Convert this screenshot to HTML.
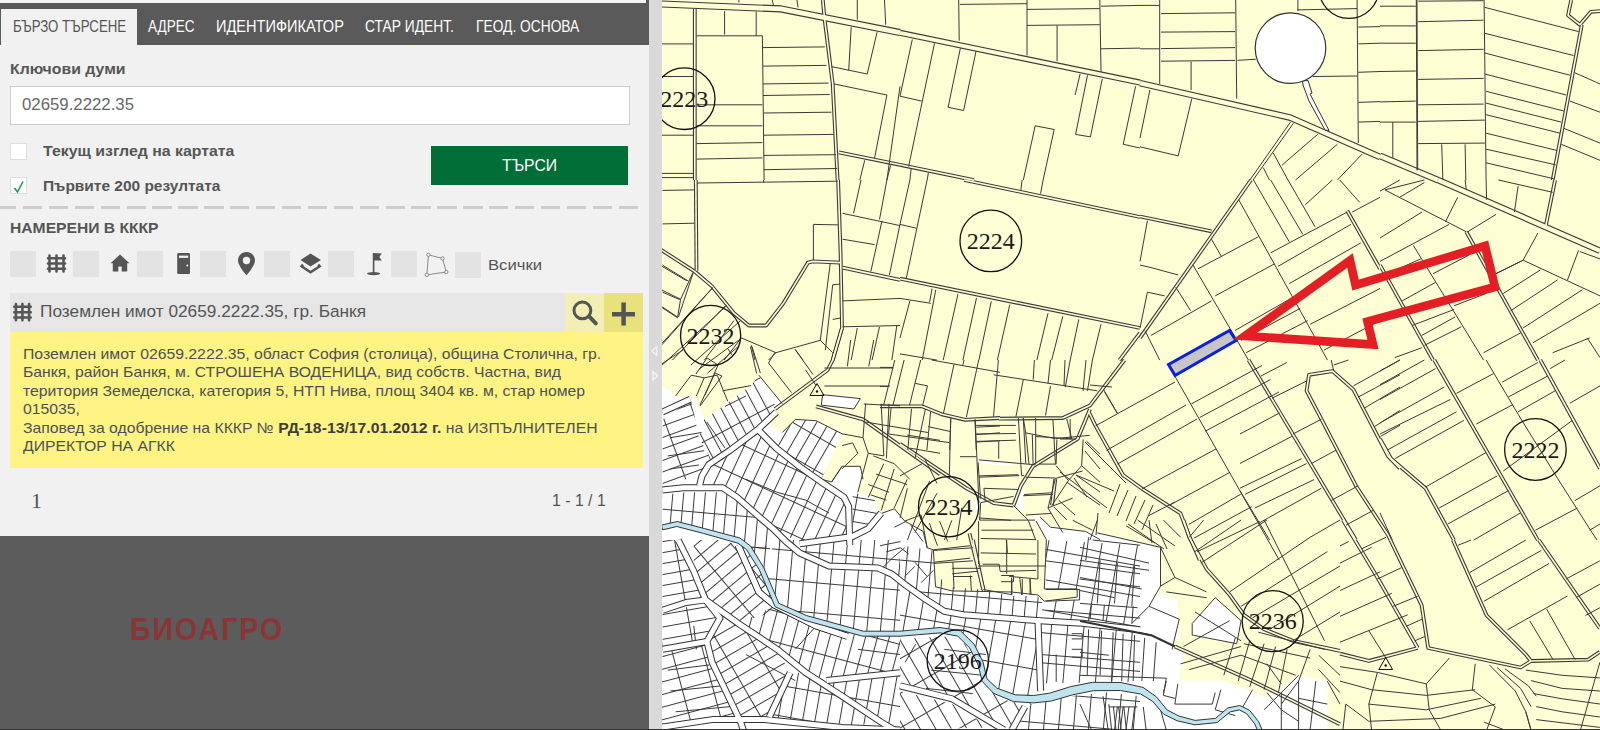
<!DOCTYPE html>
<html><head><meta charset="utf-8">
<style>
*{margin:0;padding:0;box-sizing:border-box}
html,body{width:1600px;height:730px;overflow:hidden;background:#fdfed3;font-family:"Liberation Sans",sans-serif}
.abs{position:absolute}
#panel{position:absolute;left:0;top:0;width:649px;height:730px;background:#f1f1f1}
#tabs{position:absolute;left:0;top:0;width:649px;height:44.6px;background:#5a5a5a}
.tab{position:absolute;top:0;height:42px;color:#fff;font-size:14.5px;line-height:47px;white-space:nowrap;letter-spacing:-0.3px}
.tab.active{background:#f1f1f1;top:8.5px;height:36.1px;left:1px;width:136px}
#topstrip{position:absolute;left:0;top:0;width:646px;height:3px;background:#f3f3f3;z-index:1}
.lbl{position:absolute;font-weight:bold;color:#555;font-size:14.5px;white-space:nowrap}
#kw{position:absolute;left:10px;top:86px;width:620px;height:39px;background:#fff;border:1px solid #ccc}
#kw span{position:absolute;left:11px;top:9px;font-size:16px;color:#666}
.cb{position:absolute;left:10px;width:17px;height:17px;background:#fff;border:1px solid #ddd}
#btn{position:absolute;left:431px;top:146px;width:197px;height:39px;background:#006e36;color:#fff;font-size:16.5px;text-align:center;line-height:39px}
#dash{position:absolute;left:-3.5px;top:206px;width:646.5px;height:2.6px;background:repeating-linear-gradient(90deg,#cdcdcd 0 19.3px,transparent 19.3px 25.9px)}
.sq{position:absolute;top:251px;width:26px;height:26px;background:#e3e3e3}
#res{position:absolute;left:10px;top:293px;width:633px;height:39px;background:#e6e6e6}
#yellow{position:absolute;left:10px;top:332px;width:633px;height:136px;background:#fff383;color:#4a4a4a;font-size:14.6px;line-height:18.3px;padding:13px 13px 0 13px}
#dark{position:absolute;left:0;top:536px;width:649px;height:194px;background:#5c5c5c}
#scroll{position:absolute;left:649px;top:0;width:13px;height:730px;background:#d9d9d9}
.t{position:absolute;white-space:nowrap;line-height:1;transform-origin:0 0}
.w{color:#fff}.b{font-weight:bold;color:#555}
.yt{position:absolute;left:22.5px;white-space:nowrap;font-size:15px;line-height:18.4px;color:#4a5256;transform:scaleX(1.05);transform-origin:0 0}
.yt b{color:#3d3d3d}
#map{position:absolute;left:662px;top:0;width:938px;height:730px;background:#fdfed3;overflow:hidden}
</style></head><body>
<div id="panel">
  <div id="topstrip"></div>
  <div id="tabs"><div class="tab active"></div></div>
  <span class="t" style="left:12.5px;top:18px;font-size:16.3px;color:#555;transform:scaleX(0.813)">БЪРЗО ТЪРСЕНЕ</span>
  <span class="t w" style="left:148px;top:18px;font-size:16.3px;transform:scaleX(0.831)">АДРЕС</span>
  <span class="t w" style="left:215.5px;top:18px;font-size:16.3px;transform:scaleX(0.895)">ИДЕНТИФИКАТОР</span>
  <span class="t w" style="left:364.5px;top:18px;font-size:16.3px;transform:scaleX(0.848)">СТАР ИДЕНТ.</span>
  <span class="t w" style="left:475.5px;top:18px;font-size:16.3px;transform:scaleX(0.846)">ГЕОД. ОСНОВА</span>
  <span class="t b" style="left:10px;top:62.2px;font-size:14px;transform:scaleX(1.13)">Ключови думи</span>
  <div id="kw"></div>
  <span class="t" style="left:22px;top:97px;font-size:16.8px;color:#666">02659.2222.35</span>
  <div class="cb" style="top:143px"></div>
  <span class="t b" style="left:43px;top:143px;font-size:15px;transform:scaleX(1.057)">Текущ изглед на картата</span>
  <div class="cb" style="top:177px"></div>
  <svg class="abs" style="left:12px;top:180px" width="14" height="14"><path d="M2.5,8 L5.5,12 L11,1.5" fill="none" stroke="#1f9e4e" stroke-width="1.6"/></svg>
  <span class="t b" style="left:43px;top:177.5px;font-size:15px;transform:scaleX(1.031)">Първите 200 резултата</span>
  <div id="btn"><span class="t w" style="left:71px;top:11px;font-size:17px;transform:scaleX(0.927)">ТЪРСИ</span></div>
  <div id="dash"></div>
  <span class="t b" style="left:10px;top:220.5px;font-size:14px;transform:scaleX(1.1175)">НАМЕРЕНИ В КККР</span>
  <div class="sq" style="left:10px"></div>
  <div class="sq" style="left:73px"></div>
  <div class="sq" style="left:137px"></div>
  <div class="sq" style="left:200px"></div>
  <div class="sq" style="left:264px"></div>
  <div class="sq" style="left:328px"></div>
  <div class="sq" style="left:391px"></div>
  <div class="sq" style="left:455px;top:252px"></div>
  <svg class="abs" style="left:0;top:0;overflow:visible" width="650" height="340">
 <g fill="#555" stroke="#555">
  <g stroke-width="2.6" stroke-linecap="round">
   <path d="M49.5,255.5V271.5M56.5,255.5V271.5M63.5,255.5V271.5M48,258.3H65M48,263.5H65M48,268.8H65"/>
  </g>
  <path stroke="none" d="M120,254.5L110.5,263.3H112.8V271.5H118.3V266.5H121.7V271.5H127.2V263.3H129.5Z"/>
  <rect x="177.2" y="253" width="12.8" height="21" rx="1.2" stroke="none"/>
  <rect x="179" y="255.6" width="9.2" height="2.3" fill="#f1f1f1" stroke="none"/>
  <circle cx="187.3" cy="265.5" r="1" fill="#f1f1f1" stroke="none"/>
  <path stroke="none" d="M246.5,252C241.8,252 238,255.8 238,260.5C238,266 246.5,275.2 246.5,275.2C246.5,275.2 255,266 255,260.5C255,255.8 251.2,252 246.5,252ZM246.5,256.8A3.7,3.7 0 1 1 246.5,264.2A3.7,3.7 0 1 1 246.5,256.8Z" fill-rule="evenodd"/>
  <path stroke="none" d="M300.5,260L310.5,253.5L321,260L310.5,266.5Z"/>
  <path fill="none" stroke-width="2.4" d="M303,264.5L301.5,266.2L310.5,272.2L319.8,266.2L318.2,264.5"/>
  <rect x="372.8" y="253" width="1.6" height="20" stroke="none"/>
  <path stroke="none" d="M373.5,253L381.8,253.5L379.3,257L381.8,260.5L373.5,260.5Z"/>
  <ellipse cx="373.6" cy="273.6" rx="6.6" ry="1.6" stroke="none"/>
 </g>
 <g fill="none" stroke="#8a8a8a" stroke-width="1">
  <path d="M428.5,254.8L442.5,258.5L446.3,272L426.8,274.8Z"/>
  <circle cx="428.5" cy="254.8" r="1.7" fill="#f1f1f1"/><circle cx="442.5" cy="258.5" r="1.7" fill="#f1f1f1"/>
  <circle cx="446.3" cy="272" r="1.7" fill="#f1f1f1"/><circle cx="426.8" cy="274.8" r="1.7" fill="#f1f1f1"/>
 </g>
</svg>
  <span class="t" style="left:488px;top:257.5px;font-size:14px;color:#555;transform:scaleX(1.19)">Всички</span>
  <div id="res"></div>
  <div class="abs" style="left:565px;top:293px;width:38.5px;height:39px;background:#f2eeb4"></div>
  <div class="abs" style="left:603.5px;top:293px;width:39.5px;height:39px;background:#e8e17c"></div>
  <svg class="abs" style="left:0;top:0;overflow:visible" width="650" height="340">
 <g stroke="#555" stroke-linecap="round" fill="none">
  <path stroke-width="2.6" d="M15.9,304V320.2M22.4,304V320.2M29.1,304V320.2M14.3,306.8H30.7M14.3,312.3H30.7M14.3,317.5H30.7"/>
  <circle cx="582.4" cy="310.4" r="8.4" stroke-width="3"/>
  <path d="M589.6,316.8L595.8,323.3" stroke-width="4"/>
  <path d="M623.6,302.6V325.6M612,314.3H635" stroke-width="4.5" stroke-linecap="butt"/>
 </g>
</svg>
  <span class="t" style="left:39.5px;top:302.5px;font-size:16.3px;color:#555;transform:scaleX(1.06)">Поземлен имот 02659.2222.35, гр. Банкя</span>
  <div id="yellow"></div>
  <div class="yt" style="top:345.0px">Поземлен имот 02659.2222.35, област София (столица), община Столична, гр.</div>
  <div class="yt" style="top:363.4px">Банкя, район Банкя, м. СТРОШЕНА ВОДЕНИЦА, вид собств. Частна, вид</div>
  <div class="yt" style="top:381.8px">територия Земеделска, категория 5, НТП Нива, площ 3404 кв. м, стар номер</div>
  <div class="yt" style="top:400.2px">015035,</div>
  <div class="yt" style="top:418.6px">Заповед за одобрение на КККР № <b>РД-18-13/17.01.2012 г.</b> на ИЗПЪЛНИТЕЛЕН</div>
  <div class="yt" style="top:437.0px">ДИРЕКТОР НА АГКК</div>
  <span class="t" style="left:31px;top:490px;font-size:22px;color:#555;font-family:'Liberation Serif',serif">1</span>
  <span class="t" style="left:552px;top:491.5px;font-size:16.5px;color:#555;transform:scaleX(0.96)">1 - 1 / 1</span>
  <div id="dark"></div>
  <span class="t" style="left:129.5px;top:614px;font-size:31px;color:#8b3537;font-weight:bold;letter-spacing:2.2px;transform:scaleX(0.92)">БИОАГРО</span>
</div>
<div id="scroll"></div>
<svg class="abs" style="left:649px;top:340px" width="13" height="45"><path d="M7.8,6.8L2.8,11L7.8,15.2Z" fill="none" stroke="#f4f4f4" stroke-width="1.3"/><path d="M4,31.5L8.5,35.7L4,40Z" fill="none" stroke="#f4f4f4" stroke-width="1.3"/></svg>
<div id="map"></div>
<div id="mapsvg" style="position:absolute;left:662px;top:0;width:938px;height:730px;overflow:hidden"><div style="position:absolute;left:-662px;top:0"><svg width="1600" height="730" viewBox="0 0 1600 730" style="position:absolute;left:0;top:0">
<defs>
<pattern id="h1500_115" patternUnits="userSpaceOnUse" width="11.5" height="20" patternTransform="rotate(60)"><line x1="0.5" y1="0" x2="0.5" y2="20" stroke="#3a3a3a" stroke-width="1"/></pattern>
<pattern id="h150_300" patternUnits="userSpaceOnUse" width="30" height="20" patternTransform="rotate(-75)"><line x1="0.5" y1="0" x2="0.5" y2="20" stroke="#3a3a3a" stroke-width="1"/></pattern>
<pattern id="h600_135" patternUnits="userSpaceOnUse" width="13.5" height="20" patternTransform="rotate(-30)"><line x1="0.5" y1="0" x2="0.5" y2="20" stroke="#3a3a3a" stroke-width="1"/></pattern>
<pattern id="h700_300" patternUnits="userSpaceOnUse" width="30" height="20" patternTransform="rotate(-20)"><line x1="0.5" y1="0" x2="0.5" y2="20" stroke="#3a3a3a" stroke-width="1"/></pattern>
<pattern id="h100_122" patternUnits="userSpaceOnUse" width="12.2" height="20" patternTransform="rotate(-80)"><line x1="0.5" y1="0" x2="0.5" y2="20" stroke="#3a3a3a" stroke-width="1"/></pattern>
<pattern id="h500_300" patternUnits="userSpaceOnUse" width="30" height="20" patternTransform="rotate(-40)"><line x1="0.5" y1="0" x2="0.5" y2="20" stroke="#3a3a3a" stroke-width="1"/></pattern>
<pattern id="h300_300" patternUnits="userSpaceOnUse" width="30" height="20" patternTransform="rotate(-60)"><line x1="0.5" y1="0" x2="0.5" y2="20" stroke="#3a3a3a" stroke-width="1"/></pattern>
<pattern id="h1700_108" patternUnits="userSpaceOnUse" width="10.8" height="20" patternTransform="rotate(80)"><line x1="0.5" y1="0" x2="0.5" y2="20" stroke="#3a3a3a" stroke-width="1"/></pattern>
<pattern id="h1000_149" patternUnits="userSpaceOnUse" width="14.9" height="20" patternTransform="rotate(10)"><line x1="0.5" y1="0" x2="0.5" y2="20" stroke="#3a3a3a" stroke-width="1"/></pattern>
<pattern id="h950_108" patternUnits="userSpaceOnUse" width="10.8" height="20" patternTransform="rotate(5)"><line x1="0.5" y1="0" x2="0.5" y2="20" stroke="#3a3a3a" stroke-width="1"/></pattern>
<pattern id="h100_300" patternUnits="userSpaceOnUse" width="30" height="20" patternTransform="rotate(-80)"><line x1="0.5" y1="0" x2="0.5" y2="20" stroke="#3a3a3a" stroke-width="1"/></pattern>
<pattern id="h950_135" patternUnits="userSpaceOnUse" width="13.5" height="20" patternTransform="rotate(5)"><line x1="0.5" y1="0" x2="0.5" y2="20" stroke="#3a3a3a" stroke-width="1"/></pattern>
<pattern id="h950_162" patternUnits="userSpaceOnUse" width="16.2" height="20" patternTransform="rotate(5)"><line x1="0.5" y1="0" x2="0.5" y2="20" stroke="#3a3a3a" stroke-width="1"/></pattern>
<pattern id="h1000_122" patternUnits="userSpaceOnUse" width="12.2" height="20" patternTransform="rotate(10)"><line x1="0.5" y1="0" x2="0.5" y2="20" stroke="#3a3a3a" stroke-width="1"/></pattern>
<pattern id="h1050_115" patternUnits="userSpaceOnUse" width="11.5" height="20" patternTransform="rotate(15)"><line x1="0.5" y1="0" x2="0.5" y2="20" stroke="#3a3a3a" stroke-width="1"/></pattern>
<pattern id="h1000_300" patternUnits="userSpaceOnUse" width="30" height="20" patternTransform="rotate(10)"><line x1="0.5" y1="0" x2="0.5" y2="20" stroke="#3a3a3a" stroke-width="1"/></pattern>
<pattern id="h950_149" patternUnits="userSpaceOnUse" width="14.9" height="20" patternTransform="rotate(5)"><line x1="0.5" y1="0" x2="0.5" y2="20" stroke="#3a3a3a" stroke-width="1"/></pattern>
<pattern id="h800_300" patternUnits="userSpaceOnUse" width="30" height="20" patternTransform="rotate(-10)"><line x1="0.5" y1="0" x2="0.5" y2="20" stroke="#3a3a3a" stroke-width="1"/></pattern>
<pattern id="h50_300" patternUnits="userSpaceOnUse" width="30" height="20" patternTransform="rotate(-85)"><line x1="0.5" y1="0" x2="0.5" y2="20" stroke="#3a3a3a" stroke-width="1"/></pattern>
<pattern id="h600_300" patternUnits="userSpaceOnUse" width="30" height="20" patternTransform="rotate(-30)"><line x1="0.5" y1="0" x2="0.5" y2="20" stroke="#3a3a3a" stroke-width="1"/></pattern>
<pattern id="h1700_122" patternUnits="userSpaceOnUse" width="12.2" height="20" patternTransform="rotate(80)"><line x1="0.5" y1="0" x2="0.5" y2="20" stroke="#3a3a3a" stroke-width="1"/></pattern>
<pattern id="h950_122" patternUnits="userSpaceOnUse" width="12.2" height="20" patternTransform="rotate(5)"><line x1="0.5" y1="0" x2="0.5" y2="20" stroke="#3a3a3a" stroke-width="1"/></pattern>
<pattern id="h250_300" patternUnits="userSpaceOnUse" width="30" height="20" patternTransform="rotate(-65)"><line x1="0.5" y1="0" x2="0.5" y2="20" stroke="#3a3a3a" stroke-width="1"/></pattern>
<pattern id="h1000_176" patternUnits="userSpaceOnUse" width="17.6" height="20" patternTransform="rotate(10)"><line x1="0.5" y1="0" x2="0.5" y2="20" stroke="#3a3a3a" stroke-width="1"/></pattern>
<pattern id="h1500_300" patternUnits="userSpaceOnUse" width="30" height="20" patternTransform="rotate(60)"><line x1="0.5" y1="0" x2="0.5" y2="20" stroke="#3a3a3a" stroke-width="1"/></pattern>
<pattern id="h1600_108" patternUnits="userSpaceOnUse" width="10.8" height="20" patternTransform="rotate(70)"><line x1="0.5" y1="0" x2="0.5" y2="20" stroke="#3a3a3a" stroke-width="1"/></pattern>
<pattern id="h1520_300" patternUnits="userSpaceOnUse" width="30" height="20" patternTransform="rotate(62)"><line x1="0.5" y1="0" x2="0.5" y2="20" stroke="#3a3a3a" stroke-width="1"/></pattern>
<pattern id="h1400_108" patternUnits="userSpaceOnUse" width="10.8" height="20" patternTransform="rotate(50)"><line x1="0.5" y1="0" x2="0.5" y2="20" stroke="#3a3a3a" stroke-width="1"/></pattern>
<pattern id="h620_101" patternUnits="userSpaceOnUse" width="10.1" height="20" patternTransform="rotate(-28)"><line x1="0.5" y1="0" x2="0.5" y2="20" stroke="#3a3a3a" stroke-width="1"/></pattern>
<pattern id="h1650_122" patternUnits="userSpaceOnUse" width="12.2" height="20" patternTransform="rotate(75)"><line x1="0.5" y1="0" x2="0.5" y2="20" stroke="#3a3a3a" stroke-width="1"/></pattern>
<pattern id="h750_300" patternUnits="userSpaceOnUse" width="30" height="20" patternTransform="rotate(-15)"><line x1="0.5" y1="0" x2="0.5" y2="20" stroke="#3a3a3a" stroke-width="1"/></pattern>
<pattern id="h1150_115" patternUnits="userSpaceOnUse" width="11.5" height="20" patternTransform="rotate(25)"><line x1="0.5" y1="0" x2="0.5" y2="20" stroke="#3a3a3a" stroke-width="1"/></pattern>
<pattern id="h1200_108" patternUnits="userSpaceOnUse" width="10.8" height="20" patternTransform="rotate(30)"><line x1="0.5" y1="0" x2="0.5" y2="20" stroke="#3a3a3a" stroke-width="1"/></pattern>
</defs>
<polygon points="662.0,385.6 678.2,397.3 691.2,396.0 699.0,406.4 704.2,419.4 722.5,406.4 727.7,401.2 751.1,385.6 758.9,375.2 782.3,403.8 774.5,411.6 771.9,427.2 782.3,432.4 795.3,419.4 816.1,420.7 842.1,433.8 821.3,479.3 831.7,481.9 842.1,466.3 860.4,466.3 863.0,479.3 857.8,492.3 873.4,497.5 880.0,513.9 894.4,508.8 904.6,521.0 923.1,531.4 927.2,547.8 933.4,549.8 935.5,586.8 951.9,591.0 1011.5,592.0 1038.2,595.0 1044.3,601.2 1077.2,597.1 1077.2,588.9 1044.3,588.9 1046.4,539.6 1036.1,521.0 1023.8,519.0 1040.0,517.0 1050.5,527.2 1085.4,531.4 1100.0,540.0 1150.0,545.0 1160.0,550.0 1152.0,590.0 1177.0,600.0 1180.0,635.0 1171.0,649.0 1184.0,652.0 1179.0,680.6 1223.0,680.6 1254.5,693.6 1267.5,696.2 1296.0,678.0 1327.0,683.0 1325.0,730.0 662.0,730.0" fill="#ffffff" stroke="none"/>
<polygon points="1060.0,530.0 1095.0,533.0 1161.0,549.0 1161.0,560.0 1060.0,560.0" fill="#ffffff" stroke="none"/>
<polygon points="822.6,394.7 860.4,398.6 853.9,409.0 821.3,405.1" fill="#ffffff" stroke="none"/>
<polygon points="1033.2,517.9 1057.9,530.2 1092.4,532.7 1092.4,540.1 1048.0,540.1" fill="#ffffff" stroke="none"/>
<polygon points="978.9,459.9 1013.5,463.6 1012.2,466.1 978.9,463.6" fill="#ffffff" stroke="none"/>
<polygon points="1015.9,488.3 1023.3,485.8 1020.9,508.0 1013.5,508.0" fill="#ffffff" stroke="none"/>
<polygon points="1014.2,488.7 1024.1,492.0 1024.1,513.4 1014.2,506.8" fill="#ffffff" stroke="none"/>
<polygon points="974.8,495.3 984.6,501.9 974.8,513.4" fill="#ffffff" stroke="none"/>
<polygon points="1080.0,531.5 1097.3,532.9 1160.5,547.3 1160.5,586.1 1149.0,606.3 1179.2,619.2 1172.0,649.4 1166.3,678.2 1252.6,689.7 1264.1,709.8 1281.3,692.6 1298.6,675.3 1327.3,681.1 1327.3,730.0 1080.0,730.0" fill="#ffffff" stroke="none"/>
<polygon points="1192.2,623.5 1215.2,597.7 1241.1,620.7 1236.7,643.7 1192.2,635.0" fill="#ffffff" stroke="none"/>
<polygon points="704.2,419.4 722.5,406.4 751.1,385.6 758.9,375.2 777.1,409.0 758.9,429.8 735.5,445.5 712.0,461.1 699.0,437.7" fill="url(#h620_101)" stroke="none"/>
<polygon points="704.2,419.4 722.5,406.4 751.1,385.6 758.9,375.2 777.1,409.0 758.9,429.8 735.5,445.5 712.0,461.1 699.0,437.7" fill="url(#h1520_300)" stroke="none"/>
<polygon points="662.6,419.4 691.2,399.9 699.0,437.7 712.0,461.1 702.9,476.7 686.0,479.3 662.6,484.5" fill="url(#h1600_108)" stroke="none"/>
<polygon points="662.6,419.4 691.2,399.9 699.0,437.7 712.0,461.1 702.9,476.7 686.0,479.3 662.6,484.5" fill="url(#h700_300)" stroke="none"/>
<polygon points="758.9,429.8 777.1,448.1 805.7,466.3 842.1,492.3 850.0,505.3 850.0,536.5 797.9,541.7 777.1,531.3 758.9,513.1 738.1,494.9 722.5,488.4 702.9,484.5 712.0,461.1 735.5,445.5" fill="url(#h1150_115)" stroke="none"/>
<polygon points="758.9,429.8 777.1,448.1 805.7,466.3 842.1,492.3 850.0,505.3 850.0,536.5 797.9,541.7 777.1,531.3 758.9,513.1 738.1,494.9 722.5,488.4 702.9,484.5 712.0,461.1 735.5,445.5" fill="url(#h250_300)" stroke="none"/>
<polygon points="782.3,432.5 795.3,419.4 816.1,420.7 842.1,433.8 821.3,479.3 805.7,466.3 777.1,448.1" fill="url(#h1200_108)" stroke="none"/>
<polygon points="782.3,432.5 795.3,419.4 816.1,420.7 842.1,433.8 821.3,479.3 805.7,466.3 777.1,448.1" fill="url(#h300_300)" stroke="none"/>
<polygon points="662.6,494.9 686.0,492.3 722.5,492.3 738.1,497.5 758.9,515.7 774.5,533.9 764.1,552.1 753.7,560.0 748.5,552.1 735.5,539.1 704.2,531.3 680.8,526.1 662.6,526.1" fill="url(#h950_108)" stroke="none"/>
<polygon points="662.6,494.9 686.0,492.3 722.5,492.3 738.1,497.5 758.9,515.7 774.5,533.9 764.1,552.1 753.7,560.0 748.5,552.1 735.5,539.1 704.2,531.3 680.8,526.1 662.6,526.1" fill="url(#h50_300)" stroke="none"/>
<polygon points="852.6,492.3 873.4,497.5 881.2,513.1 868.2,528.7 852.6,536.5" fill="url(#h100_122)" stroke="none"/>
<polygon points="852.6,492.3 873.4,497.5 881.2,513.1 868.2,528.7 852.6,536.5" fill="url(#h1000_300)" stroke="none"/>
<polygon points="662.6,540.0 678.2,540.0 693.8,571.2 705.5,599.9 686.0,602.5 662.6,610.3" fill="url(#h1700_108)" stroke="none"/>
<polygon points="662.6,540.0 678.2,540.0 693.8,571.2 705.5,599.9 686.0,602.5 662.6,610.3" fill="url(#h800_300)" stroke="none"/>
<polygon points="693.8,540.0 719.9,540.0 748.5,547.8 761.5,568.6 777.1,605.1 769.3,612.9 738.1,623.3 705.5,599.9 693.8,571.2" fill="url(#h1400_108)" stroke="none"/>
<polygon points="693.8,540.0 719.9,540.0 748.5,547.8 761.5,568.6 777.1,605.1 769.3,612.9 738.1,623.3 705.5,599.9 693.8,571.2" fill="url(#h500_300)" stroke="none"/>
<polygon points="738.1,623.3 777.1,605.1 805.8,618.1 863.0,633.7 900.0,636.3 900.0,672.7 826.6,680.6 805.8,672.7 777.1,649.3" fill="url(#h1050_115)" stroke="none"/>
<polygon points="738.1,623.3 777.1,605.1 805.8,618.1 863.0,633.7 900.0,636.3 900.0,672.7 826.6,680.6 805.8,672.7 777.1,649.3" fill="url(#h150_300)" stroke="none"/>
<polygon points="706.9,641.5 712.1,662.3 740.7,722.2 769.3,717.0 790.1,672.7 777.1,649.3 738.1,623.3 719.9,618.1" fill="url(#h1500_115)" stroke="none"/>
<polygon points="706.9,641.5 712.1,662.3 740.7,722.2 769.3,717.0 790.1,672.7 777.1,649.3 738.1,623.3 719.9,618.1" fill="url(#h600_300)" stroke="none"/>
<polygon points="662.6,651.9 706.9,644.1 712.1,662.3 740.7,722.2 712.1,719.6 660.0,727.4" fill="url(#h1650_122)" stroke="none"/>
<polygon points="662.6,651.9 706.9,644.1 712.1,662.3 740.7,722.2 712.1,719.6 660.0,727.4" fill="url(#h750_300)" stroke="none"/>
<polygon points="662.6,612.9 705.5,602.5 719.9,618.1 706.9,641.5 662.6,649.3" fill="url(#h1700_122)" stroke="none"/>
<polygon points="662.6,612.9 705.5,602.5 719.9,618.1 706.9,641.5 662.6,649.3" fill="url(#h800_300)" stroke="none"/>
<polygon points="790.1,672.7 805.8,672.7 826.6,680.6 842.2,696.2 881.2,722.2 842.2,727.4 764.1,719.6 769.3,717.0" fill="url(#h1000_122)" stroke="none"/>
<polygon points="790.1,672.7 805.8,672.7 826.6,680.6 842.2,696.2 881.2,722.2 842.2,727.4 764.1,719.6 769.3,717.0" fill="url(#h100_300)" stroke="none"/>
<polygon points="826.6,681.9 900.0,674.0 900.0,730.0 894.3,730.0 881.2,722.2 842.2,696.2" fill="url(#h1000_122)" stroke="none"/>
<polygon points="826.6,681.9 900.0,674.0 900.0,730.0 894.3,730.0 881.2,722.2 842.2,696.2" fill="url(#h100_300)" stroke="none"/>
<polygon points="771.9,540.0 900.0,540.0 900.0,589.5 855.2,569.9 829.2,566.0 797.9,555.6 771.9,555.6" fill="url(#h950_135)" stroke="none"/>
<polygon points="771.9,540.0 900.0,540.0 900.0,589.5 855.2,569.9 829.2,566.0 797.9,555.6 771.9,555.6" fill="url(#h50_300)" stroke="none"/>
<polygon points="771.9,555.6 797.9,555.6 829.2,566.0 855.2,569.9 900.0,589.5 900.0,633.7 863.0,633.7 805.8,618.1 777.1,605.1 761.5,568.6 748.5,547.8 769.3,545.2" fill="url(#h950_135)" stroke="none"/>
<polygon points="771.9,555.6 797.9,555.6 829.2,566.0 855.2,569.9 900.0,589.5 900.0,633.7 863.0,633.7 805.8,618.1 777.1,605.1 761.5,568.6 748.5,547.8 769.3,545.2" fill="url(#h50_300)" stroke="none"/>
<polygon points="900.0,545.2 933.8,550.4 933.8,573.8 952.1,586.9 978.1,589.5 1011.9,596.0 1037.9,596.0 1041.9,602.5 1040.6,620.7 978.1,615.5 944.2,610.3 900.0,579.0" fill="url(#h950_122)" stroke="none"/>
<polygon points="900.0,545.2 933.8,550.4 933.8,573.8 952.1,586.9 978.1,589.5 1011.9,596.0 1037.9,596.0 1041.9,602.5 1040.6,620.7 978.1,615.5 944.2,610.3 900.0,579.0" fill="url(#h50_300)" stroke="none"/>
<polygon points="1045.8,540.0 1140.0,545.2 1140.0,629.8 1082.2,623.3 1040.6,620.7 1043.2,602.5 1045.8,601.2 1079.6,599.9 1079.6,589.5 1045.8,589.5" fill="url(#h1000_176)" stroke="none"/>
<polygon points="1045.8,540.0 1140.0,545.2 1140.0,629.8 1082.2,623.3 1040.6,620.7 1043.2,602.5 1045.8,601.2 1079.6,599.9 1079.6,589.5 1045.8,589.5" fill="url(#h100_300)" stroke="none"/>
<polygon points="900.0,633.7 952.1,631.1 967.7,641.5 980.7,667.5 988.5,685.8 1009.3,698.8 1037.9,700.1 1040.6,691.0 1040.6,620.7 978.1,615.5 944.2,610.3 900.0,584.2" fill="url(#h1000_149)" stroke="none"/>
<polygon points="900.0,633.7 952.1,631.1 967.7,641.5 980.7,667.5 988.5,685.8 1009.3,698.8 1037.9,700.1 1040.6,691.0 1040.6,620.7 978.1,615.5 944.2,610.3 900.0,584.2" fill="url(#h100_300)" stroke="none"/>
<polygon points="1040.6,620.7 1140.0,629.8 1140.0,681.9 1045.8,683.2 1040.6,691.0" fill="url(#h950_162)" stroke="none"/>
<polygon points="1040.6,620.7 1140.0,629.8 1140.0,681.9 1045.8,683.2 1040.6,691.0" fill="url(#h50_300)" stroke="none"/>
<polygon points="900.0,638.9 952.1,636.3 965.1,644.1 978.1,670.1 985.9,688.4 1009.3,701.4 1037.9,704.0 1024.9,706.6 1011.9,730.0 1004.1,730.0 991.1,722.2 952.1,698.8 900.0,685.8" fill="url(#h600_135)" stroke="none"/>
<polygon points="900.0,638.9 952.1,636.3 965.1,644.1 978.1,670.1 985.9,688.4 1009.3,701.4 1037.9,704.0 1024.9,706.6 1011.9,730.0 1004.1,730.0 991.1,722.2 952.1,698.8 900.0,685.8" fill="url(#h1500_300)" stroke="none"/>
<polygon points="900.0,691.0 952.1,704.0 991.1,727.4 900.0,730.0" fill="url(#h600_135)" stroke="none"/>
<polygon points="900.0,691.0 952.1,704.0 991.1,727.4 900.0,730.0" fill="url(#h1500_300)" stroke="none"/>
<polygon points="1037.9,704.0 1069.2,696.2 1108.2,692.3 1140.0,696.2 1140.0,730.0 1011.9,730.0 1024.9,706.6" fill="url(#h950_149)" stroke="none"/>
<polygon points="1037.9,704.0 1069.2,696.2 1108.2,692.3 1140.0,696.2 1140.0,730.0 1011.9,730.0 1024.9,706.6" fill="url(#h50_300)" stroke="none"/>
<g fill="none" stroke="#3a3a3a" stroke-width="1" stroke-linejoin="round">
<polyline points="660.0,3.9 780.9,8.9 900.0,32.6" stroke-width="7.1"/>
<polyline points="694.8,8.9 694.8,180.1" stroke-width="3.8"/>
<polyline points="822.8,0.0 824.8,21.0 832.7,83.9 837.6,180.1" stroke-width="3.8"/>
<polyline points="838.8,152.4 900.0,164.8" stroke-width="3.8"/>
<polyline points="900.0,32.8 1140.0,82.6" stroke-width="6.1"/>
<polyline points="900.0,164.8 974.0,180.1" stroke-width="3.8"/>
<polyline points="1140.0,83.1 1290.5,117.7 1380.0,157.1" stroke-width="6.6"/>
<polyline points="1380.0,155.9 1438.0,180.1" stroke-width="6.6"/>
<polyline points="1581.8,24.7 1552.7,180.1" stroke-width="3.8"/>
<polyline points="1571.2,0.0 1568.0,15.3 1579.8,24.7 1590.9,11.8 1600.0,11.1" stroke-width="3.8"/>
<polyline points="695.8,180.0 696.5,270.8" stroke-width="3.8"/>
<polyline points="838.1,180.0 840.6,254.0 842.0,328.0 832.7,360.1" stroke-width="3.8"/>
<polyline points="660.0,249.1 694.5,271.3 711.8,286.1 734.0,313.2 748.8,325.5 766.1,325.5 783.3,303.3 808.0,262.6 812.9,261.4 840.1,262.6" stroke-width="3.8"/>
<polyline points="842.5,267.6 900.0,279.9" stroke-width="3.8"/>
<polyline points="964.1,180.0 1140.0,217.0" stroke-width="3.8"/>
<polyline points="900.0,278.7 1140.0,328.0" stroke-width="3.8"/>
<polyline points="1140.0,332.9 1119.5,360.1" stroke-width="3.8"/>
<polyline points="1251.0,180.0 1140.0,337.9" stroke-width="3.8"/>
<polyline points="1140.0,216.5 1211.5,231.3" stroke-width="3.8"/>
<polyline points="1347.2,210.8 1380.0,268.8" stroke-width="3.8"/>
<polyline points="1438.0,180.0 1600.0,250.8" stroke-width="6.6"/>
<polyline points="1555.1,180.0 1545.8,225.6" stroke-width="3.8"/>
<polyline points="1466.3,231.8 1537.9,360.1" stroke-width="3.8"/>
<polyline points="1380.0,265.1 1433.0,360.1" stroke-width="3.8"/>
<polyline points="816.1,406.4 863.0,419.4 940.0,474.1" stroke-width="3.8"/>
<polyline points="842.0,328.0 832.7,360.0 827.7,370.0 775.0,409.0" stroke-width="3.8"/>
<polyline points="880.0,406.3 921.9,406.3 941.7,414.3 965.1,419.8 1000.0,418.0" stroke-width="3.8"/>
<polyline points="998.7,418.7 1062.8,418.0 1089.9,405.6 1124.5,360.0" stroke-width="3.8"/>
<polyline points="1089.9,409.3 1077.6,438.9 1033.2,466.1 1020.9,485.8 1013.5,505.5" stroke-width="3.8"/>
<polyline points="900.0,443.9 966.6,488.3 993.7,503.1 1013.5,505.5" stroke-width="3.8"/>
<polyline points="1055.3,478.9 1052.0,505.2" stroke-width="3.8"/>
<polyline points="969.4,533.4 983.7,590.9" stroke-width="3.8"/>
<polyline points="1088.8,412.0 1095.6,425.8 1123.0,475.0 1142.2,488.8 1180.5,513.4 1188.8,535.3 1199.7,560.0" stroke-width="3.8"/>
<polyline points="1248.6,360.0 1355.9,540.0" stroke-width="3.8"/>
<polyline points="1400.0,468.5 1388.0,456.2 1353.4,389.6 1332.5,371.1 1309.0,374.8 1306.6,390.8 1321.4,419.2 1355.9,485.7 1388.0,535.0 1390.4,540.0" stroke-width="3.8"/>
<polyline points="1434.3,360.0 1537.9,540.1" stroke-width="3.8"/>
<polyline points="1380.0,438.9 1391.1,458.7 1425.6,488.3 1454.0,540.1" stroke-width="3.8"/>
<polyline points="1540.3,360.0 1600.0,468.5" stroke-width="3.8"/>
<polyline points="972.9,540.0 983.3,589.5" stroke-width="3.8"/>
<polyline points="1183.5,520.0 1189.3,537.3 1206.5,568.9 1229.6,594.8 1243.9,614.9 1264.1,629.3 1292.8,640.8 1340.0,650.9" stroke-width="3.8"/>
<polyline points="1174.9,646.5 1252.6,681.1 1340.0,724.2" stroke-width="3.8"/>
<polyline points="1390.4,540.0 1421.6,605.1 1428.2,648.0 1520.6,667.5 1531.0,661.0 1588.2,659.7 1599.9,651.9" stroke-width="3.8"/>
<polyline points="1452.9,540.0 1486.7,615.5 1525.8,654.5 1531.0,661.0" stroke-width="3.8"/>
<polyline points="1538.8,540.0 1599.9,628.5" stroke-width="3.8"/>
<polyline points="1342.9,520.0 1377.4,577.5 1417.7,648.0" stroke-width="3.8"/>
<polyline points="1340.0,653.7 1368.8,660.9 1417.7,648.0" stroke-width="3.8"/>
</g><g fill="none" stroke="#fdfed3" stroke-width="2" stroke-linejoin="round">
<polyline points="660.0,3.9 780.9,8.9 900.0,32.6" stroke-width="4.9"/>
<polyline points="694.8,8.9 694.8,180.1" stroke-width="1.6"/>
<polyline points="822.8,0.0 824.8,21.0 832.7,83.9 837.6,180.1" stroke-width="1.6"/>
<polyline points="838.8,152.4 900.0,164.8" stroke-width="1.6"/>
<polyline points="900.0,32.8 1140.0,82.6" stroke-width="3.9"/>
<polyline points="900.0,164.8 974.0,180.1" stroke-width="1.6"/>
<polyline points="1140.0,83.1 1290.5,117.7 1380.0,157.1" stroke-width="4.4"/>
<polyline points="1380.0,155.9 1438.0,180.1" stroke-width="4.4"/>
<polyline points="1581.8,24.7 1552.7,180.1" stroke-width="1.6"/>
<polyline points="1571.2,0.0 1568.0,15.3 1579.8,24.7 1590.9,11.8 1600.0,11.1" stroke-width="1.6"/>
<polyline points="695.8,180.0 696.5,270.8" stroke-width="1.6"/>
<polyline points="838.1,180.0 840.6,254.0 842.0,328.0 832.7,360.1" stroke-width="1.6"/>
<polyline points="660.0,249.1 694.5,271.3 711.8,286.1 734.0,313.2 748.8,325.5 766.1,325.5 783.3,303.3 808.0,262.6 812.9,261.4 840.1,262.6" stroke-width="1.6"/>
<polyline points="842.5,267.6 900.0,279.9" stroke-width="1.6"/>
<polyline points="964.1,180.0 1140.0,217.0" stroke-width="1.6"/>
<polyline points="900.0,278.7 1140.0,328.0" stroke-width="1.6"/>
<polyline points="1140.0,332.9 1119.5,360.1" stroke-width="1.6"/>
<polyline points="1251.0,180.0 1140.0,337.9" stroke-width="1.6"/>
<polyline points="1140.0,216.5 1211.5,231.3" stroke-width="1.6"/>
<polyline points="1347.2,210.8 1380.0,268.8" stroke-width="1.6"/>
<polyline points="1438.0,180.0 1600.0,250.8" stroke-width="4.4"/>
<polyline points="1555.1,180.0 1545.8,225.6" stroke-width="1.6"/>
<polyline points="1466.3,231.8 1537.9,360.1" stroke-width="1.6"/>
<polyline points="1380.0,265.1 1433.0,360.1" stroke-width="1.6"/>
<polyline points="816.1,406.4 863.0,419.4 940.0,474.1" stroke-width="1.6"/>
<polyline points="842.0,328.0 832.7,360.0 827.7,370.0 775.0,409.0" stroke-width="1.6"/>
<polyline points="880.0,406.3 921.9,406.3 941.7,414.3 965.1,419.8 1000.0,418.0" stroke-width="1.6"/>
<polyline points="998.7,418.7 1062.8,418.0 1089.9,405.6 1124.5,360.0" stroke-width="1.6"/>
<polyline points="1089.9,409.3 1077.6,438.9 1033.2,466.1 1020.9,485.8 1013.5,505.5" stroke-width="1.6"/>
<polyline points="900.0,443.9 966.6,488.3 993.7,503.1 1013.5,505.5" stroke-width="1.6"/>
<polyline points="1055.3,478.9 1052.0,505.2" stroke-width="1.6"/>
<polyline points="969.4,533.4 983.7,590.9" stroke-width="1.6"/>
<polyline points="1088.8,412.0 1095.6,425.8 1123.0,475.0 1142.2,488.8 1180.5,513.4 1188.8,535.3 1199.7,560.0" stroke-width="1.6"/>
<polyline points="1248.6,360.0 1355.9,540.0" stroke-width="1.6"/>
<polyline points="1400.0,468.5 1388.0,456.2 1353.4,389.6 1332.5,371.1 1309.0,374.8 1306.6,390.8 1321.4,419.2 1355.9,485.7 1388.0,535.0 1390.4,540.0" stroke-width="1.6"/>
<polyline points="1434.3,360.0 1537.9,540.1" stroke-width="1.6"/>
<polyline points="1380.0,438.9 1391.1,458.7 1425.6,488.3 1454.0,540.1" stroke-width="1.6"/>
<polyline points="1540.3,360.0 1600.0,468.5" stroke-width="1.6"/>
<polyline points="972.9,540.0 983.3,589.5" stroke-width="1.6"/>
<polyline points="1183.5,520.0 1189.3,537.3 1206.5,568.9 1229.6,594.8 1243.9,614.9 1264.1,629.3 1292.8,640.8 1340.0,650.9" stroke-width="1.6"/>
<polyline points="1174.9,646.5 1252.6,681.1 1340.0,724.2" stroke-width="1.6"/>
<polyline points="1390.4,540.0 1421.6,605.1 1428.2,648.0 1520.6,667.5 1531.0,661.0 1588.2,659.7 1599.9,651.9" stroke-width="1.6"/>
<polyline points="1452.9,540.0 1486.7,615.5 1525.8,654.5 1531.0,661.0" stroke-width="1.6"/>
<polyline points="1538.8,540.0 1599.9,628.5" stroke-width="1.6"/>
<polyline points="1342.9,520.0 1377.4,577.5 1417.7,648.0" stroke-width="1.6"/>
<polyline points="1340.0,653.7 1368.8,660.9 1417.7,648.0" stroke-width="1.6"/>
</g><g fill="none" stroke="#3a3a3a" stroke-width="1" stroke-linejoin="round">
<polyline points="738.9,0.0 738.9,2.5"/>
<polyline points="772.2,0.0 773.5,5.4"/>
<polyline points="796.9,0.0 798.1,7.4"/>
<polyline points="857.3,0.0 857.3,19.7"/>
<polyline points="884.5,0.0 885.7,24.7"/>
<polyline points="660.0,43.9 693.3,43.9"/>
<polyline points="660.0,76.5 693.3,76.5"/>
<polyline points="660.0,135.2 693.3,135.2"/>
<polyline points="660.0,173.4 693.3,173.4"/>
<polyline points="660.0,177.6 693.3,177.6"/>
<polyline points="724.6,11.1 724.6,34.5"/>
<polyline points="756.2,11.6 756.2,35.8"/>
<polyline points="696.5,35.8 762.4,35.8 764.1,180.1"/>
<polyline points="696.5,104.8 762.4,104.8"/>
<polyline points="696.5,125.8 762.4,125.8"/>
<polyline points="696.5,143.6 762.4,142.6"/>
<polyline points="696.5,159.1 762.4,157.9"/>
<polyline points="762.4,47.6 824.8,46.9"/>
<polyline points="763.1,66.1 826.5,65.4"/>
<polyline points="763.1,83.9 828.5,83.1"/>
<polyline points="763.1,95.5 829.7,94.5"/>
<polyline points="763.6,113.0 831.4,112.2"/>
<polyline points="763.6,135.2 833.9,134.4"/>
<polyline points="763.6,155.4 835.9,154.7"/>
<polyline points="763.6,169.7 837.1,168.5"/>
<polyline points="851.2,27.1 848.7,70.3"/>
<polyline points="877.1,32.1 867.2,74.0"/>
<polyline points="831.4,66.6 867.2,74.0"/>
<polyline points="833.9,83.9 886.9,95.0"/>
<polyline points="886.9,95.0 874.6,157.9"/>
<polyline points="900.0,86.3 886.9,180.1"/>
<polyline points="864.7,160.3 859.8,180.1"/>
<polyline points="890.6,165.3 886.9,180.1"/>
<polyline points="958.7,0.0 959.2,40.7"/>
<polyline points="959.9,4.4 1027.0,3.7"/>
<polyline points="1027.0,0.0 1027.0,55.5"/>
<polyline points="1027.0,9.4 1099.8,8.6"/>
<polyline points="1027.0,25.4 1099.8,24.7"/>
<polyline points="1057.1,25.4 1057.1,61.2"/>
<polyline points="1099.8,0.0 1101.0,71.5"/>
<polyline points="1101.0,6.2 1140.0,5.4"/>
<polyline points="1101.0,48.8 1140.0,48.1"/>
<polyline points="912.3,39.5 900.0,96.2"/>
<polyline points="900.0,96.2 921.7,101.1"/>
<polyline points="934.5,43.2 908.6,166.5"/>
<polyline points="960.4,48.1 948.1,107.3 963.6,110.5 976.0,51.3"/>
<polyline points="1080.1,74.0 1075.1,95.0"/>
<polyline points="1087.5,75.2 1075.6,134.4 1090.4,136.9 1102.3,78.9"/>
<polyline points="1035.2,125.8 1054.2,129.5 1043.1,180.1"/>
<polyline points="1035.2,125.8 1023.3,180.1"/>
<polyline points="1135.6,86.3 1123.2,144.3 1140.0,148.0"/>
<polyline points="911.1,169.0 909.9,180.1"/>
<polyline points="928.4,172.7 927.1,180.1"/>
<polyline points="1159.7,0.0 1159.7,83.9"/>
<polyline points="1140.0,5.4 1159.7,5.4"/>
<polyline points="1140.0,48.8 1159.7,48.8"/>
<polyline points="1161.0,13.6 1235.0,12.8"/>
<polyline points="1161.0,32.1 1235.0,31.6"/>
<polyline points="1161.0,48.6 1235.0,47.6"/>
<polyline points="1161.0,61.2 1235.0,60.4"/>
<polyline points="1235.7,0.0 1236.7,98.7"/>
<polyline points="1191.1,61.7 1191.1,90.0"/>
<polyline points="1297.9,0.0 1297.9,11.1"/>
<polyline points="1297.9,9.9 1357.1,8.6"/>
<polyline points="1237.4,60.4 1255.9,59.2"/>
<polyline points="1357.1,0.0 1358.3,143.1"/>
<polyline points="1358.3,27.1 1380.0,26.6"/>
<polyline points="1358.3,43.9 1380.0,43.2"/>
<polyline points="1358.3,72.3 1380.0,71.5"/>
<polyline points="1358.3,102.4 1380.0,101.6"/>
<polyline points="1358.3,122.1 1380.0,121.4"/>
<polyline points="1312.7,76.5 1357.1,76.0"/>
<polyline points="1149.9,90.0 1140.0,138.1"/>
<polyline points="1140.0,146.8 1178.2,155.9 1191.8,98.7"/>
<polyline points="1290.5,122.1 1249.8,180.1"/>
<polyline points="1293.4,123.3 1253.0,180.1"/>
<polyline points="1273.2,152.9 1288.0,180.1"/>
<polyline points="1263.3,167.7 1269.5,180.1"/>
<polyline points="1281.8,165.3 1317.6,134.4"/>
<polyline points="1295.4,180.1 1337.3,144.3"/>
<polyline points="1337.3,180.1 1362.0,154.2"/>
<polyline points="1417.0,0.0 1417.7,170.2"/>
<polyline points="1416.3,0.0 1417.0,170.2"/>
<polyline points="1380.0,6.2 1415.8,6.2"/>
<polyline points="1380.0,25.9 1415.8,25.9"/>
<polyline points="1380.0,43.2 1415.8,43.2"/>
<polyline points="1380.0,71.5 1415.8,71.0"/>
<polyline points="1380.0,101.9 1415.8,101.1"/>
<polyline points="1380.0,122.1 1415.8,122.1"/>
<polyline points="1392.8,122.1 1392.8,157.9"/>
<polyline points="1418.2,1.2 1483.6,0.7"/>
<polyline points="1418.2,21.7 1483.6,20.2"/>
<polyline points="1418.2,50.6 1483.6,49.3"/>
<polyline points="1418.2,79.4 1483.6,78.4"/>
<polyline points="1418.2,104.8 1483.6,104.1"/>
<polyline points="1418.2,121.4 1484.8,120.1"/>
<polyline points="1418.2,143.6 1484.8,143.1"/>
<polyline points="1484.1,0.0 1486.1,180.1"/>
<polyline points="1441.7,144.3 1442.9,180.1"/>
<polyline points="1465.1,144.3 1465.8,180.1"/>
<polyline points="1484.8,7.4 1578.6,31.6"/>
<polyline points="1484.8,33.3 1573.6,55.5"/>
<polyline points="1484.8,53.0 1569.9,75.2"/>
<polyline points="1484.8,74.0 1566.2,95.0"/>
<polyline points="1486.1,91.3 1563.8,111.0"/>
<polyline points="1486.1,103.1 1561.3,122.1"/>
<polyline points="1486.1,114.7 1560.1,133.2"/>
<polyline points="1486.1,133.2 1557.1,150.5"/>
<polyline points="1486.1,149.2 1555.6,164.8"/>
<polyline points="1486.1,162.8 1553.9,178.8"/>
<polyline points="1574.9,72.8 1600.0,83.9"/>
<polyline points="1569.9,101.1 1600.0,112.2"/>
<polyline points="1563.8,128.3 1600.0,143.1"/>
<polyline points="1561.3,144.3 1600.0,160.3"/>
<polyline points="662.5,190.4 694.5,189.9"/>
<polyline points="662.5,223.9 694.5,223.2"/>
<polyline points="697.0,183.0 837.6,181.2"/>
<polyline points="763.6,180.0 763.6,182.5"/>
<polyline points="813.4,224.4 838.1,224.9"/>
<polyline points="813.4,224.4 813.4,260.2"/>
<polyline points="662.5,265.1 688.4,281.1"/>
<polyline points="693.3,272.5 678.5,316.9"/>
<polyline points="662.5,292.2 679.7,299.6"/>
<polyline points="662.5,307.0 677.3,316.9"/>
<polyline points="713.0,287.3 662.5,342.8"/>
<polyline points="725.4,305.8 672.3,360.1"/>
<polyline points="734.0,320.6 704.4,360.1"/>
<polyline points="741.4,337.9 724.1,360.1"/>
<polyline points="741.4,337.9 775.9,352.7 820.3,340.3 832.7,352.7"/>
<polyline points="751.3,345.3 755.0,360.1"/>
<polyline points="795.7,350.2 803.1,360.1"/>
<polyline points="775.9,352.7 768.5,360.1"/>
<polyline points="830.2,263.9 820.3,340.3"/>
<polyline points="832.7,284.8 840.1,284.1"/>
<polyline points="832.7,284.8 825.3,350.2"/>
<polyline points="832.7,319.4 840.1,318.1"/>
<polyline points="842.5,213.3 900.0,225.6"/>
<polyline points="853.6,213.3 861.0,180.0"/>
<polyline points="879.5,219.5 886.9,180.0"/>
<polyline points="842.5,239.2 874.6,244.6"/>
<polyline points="870.9,271.3 882.0,220.7"/>
<polyline points="889.4,275.0 900.0,224.4"/>
<polyline points="842.5,300.9 900.0,298.4"/>
<polyline points="842.5,326.8 900.0,325.5"/>
<polyline points="857.3,328.0 851.2,360.1"/>
<polyline points="879.5,326.8 872.1,360.1"/>
<polyline points="896.8,325.5 891.9,360.1"/>
<polyline points="662.1,344.6 712.4,288.0"/>
<polyline points="662.1,365.1 726.8,305.5"/>
<polyline points="690.8,365.1 740.2,320.9"/>
<polyline points="699.1,369.2 741.2,338.4"/>
<polyline points="707.3,373.3 738.1,346.6"/>
<polyline points="662.1,266.4 686.7,280.8"/>
<polyline points="692.9,272.6 680.6,299.3 677.5,317.8 662.1,307.6"/>
<polyline points="750.4,346.6 756.6,373.3"/>
<polyline points="662.1,290.1 680.6,299.3"/>
<polyline points="727.8,348.7 731.9,354.8"/>
<polyline points="1022.1,180.0 1020.9,189.9"/>
<polyline points="1043.1,180.0 1040.6,193.6"/>
<polyline points="909.9,180.0 900.0,224.4"/>
<polyline points="927.1,180.0 906.2,278.7"/>
<polyline points="900.0,224.4 916.0,228.1"/>
<polyline points="932.1,288.5 929.6,302.1"/>
<polyline points="900.0,298.4 930.8,303.3"/>
<polyline points="935.8,289.8 922.2,360.1"/>
<polyline points="958.0,294.0 943.2,360.1"/>
<polyline points="976.5,297.9 962.9,360.1"/>
<polyline points="991.3,301.4 978.9,360.1"/>
<polyline points="1009.8,304.6 997.4,360.1"/>
<polyline points="1048.0,313.2 1036.9,360.1"/>
<polyline points="1062.8,316.2 1051.7,360.1"/>
<polyline points="1078.8,319.4 1070.2,360.1"/>
<polyline points="1101.0,324.3 1092.4,360.1"/>
<polyline points="909.9,300.9 900.0,337.9"/>
<polyline points="900.0,353.9 937.0,360.1"/>
<polyline points="1147.4,220.7 1140.0,261.4"/>
<polyline points="1140.0,265.1 1151.1,267.6 1178.2,275.0"/>
<polyline points="1147.4,292.2 1164.7,295.9"/>
<polyline points="1147.4,292.2 1140.0,328.0"/>
<polyline points="1238.7,199.7 1327.5,360.1"/>
<polyline points="1193.0,265.1 1248.5,360.1"/>
<polyline points="1211.5,239.2 1221.4,256.5"/>
<polyline points="1175.8,287.3 1190.6,310.7"/>
<polyline points="1144.9,330.5 1159.7,360.1"/>
<polyline points="1253.5,180.0 1289.2,241.7"/>
<polyline points="1270.7,180.0 1302.8,234.3"/>
<polyline points="1288.0,180.0 1315.1,226.9"/>
<polyline points="1198.0,268.8 1258.4,236.7"/>
<polyline points="1270.7,252.8 1347.2,212.1"/>
<polyline points="1215.2,295.9 1274.4,263.9"/>
<polyline points="1278.1,266.3 1350.9,224.4"/>
<polyline points="1289.2,283.6 1360.8,242.9"/>
<polyline points="1151.1,335.4 1211.5,300.9"/>
<polyline points="1235.0,330.5 1295.4,295.9"/>
<polyline points="1241.1,340.3 1300.3,308.3"/>
<polyline points="1310.2,324.3 1380.0,288.5"/>
<polyline points="1246.1,352.7 1307.7,320.6"/>
<polyline points="1323.8,350.2 1380.0,320.6"/>
<polyline points="1305.3,204.7 1332.4,180.0"/>
<polyline points="1352.1,212.1 1380.0,197.3"/>
<polyline points="1339.8,180.0 1359.5,202.2"/>
<polyline points="1465.1,180.0 1466.3,189.9"/>
<polyline points="1486.1,180.0 1486.6,199.7"/>
<polyline points="1518.1,186.2 1514.4,212.1"/>
<polyline points="1498.4,180.0 1552.7,192.3"/>
<polyline points="1380.0,191.1 1399.7,180.0"/>
<polyline points="1384.9,189.9 1424.4,180.0"/>
<polyline points="1384.9,189.9 1466.3,231.8"/>
<polyline points="1399.7,197.3 1424.4,182.5"/>
<polyline points="1380.0,238.0 1421.9,212.1"/>
<polyline points="1380.0,261.4 1449.1,224.4"/>
<polyline points="1445.4,221.9 1457.7,197.3"/>
<polyline points="1467.6,231.8 1495.9,214.5"/>
<polyline points="1523.1,260.2 1537.9,233.0"/>
<polyline points="1523.1,260.2 1600.0,295.9"/>
<polyline points="1523.1,260.2 1495.9,273.7"/>
<polyline points="1567.5,279.9 1578.6,250.3"/>
<polyline points="1413.3,245.4 1483.6,360.1"/>
<polyline points="1387.4,273.7 1420.7,258.9"/>
<polyline points="1402.2,300.9 1435.5,282.4"/>
<polyline points="1412.1,325.5 1454.0,309.5"/>
<polyline points="1421.9,335.4 1455.2,316.9"/>
<polyline points="1424.4,345.3 1461.4,326.8"/>
<polyline points="1394.8,357.6 1421.9,347.7"/>
<polyline points="1454.0,305.8 1486.1,293.5"/>
<polyline points="1433.0,273.7 1468.8,255.2"/>
<polyline points="1495.9,273.7 1523.1,260.2"/>
<polyline points="1503.3,293.5 1540.3,270.0"/>
<polyline points="1510.7,310.7 1557.6,279.9"/>
<polyline points="1523.1,328.0 1582.3,289.8"/>
<polyline points="1532.9,342.8 1600.0,303.3"/>
<polyline points="1552.7,352.7 1589.7,337.9"/>
<polyline points="1483.6,352.7 1520.6,332.9"/>
<polyline points="1587.2,337.9 1600.0,357.6"/>
<polyline points="1579.8,251.5 1600.0,258.9"/>
<polyline points="745.9,479.3 777.1,492.3 805.7,500.1 829.1,513.1"/>
<polyline points="670.4,437.7 701.6,432.5"/>
<polyline points="667.8,455.9 704.2,450.7"/>
<polyline points="670.4,468.9 699.0,465.0"/>
<polyline points="725.1,448.1 706.8,422.0"/>
<polyline points="822.6,394.7 860.4,398.6 853.9,409.0 821.3,405.1 822.6,394.7"/>
<polyline points="782.3,432.5 795.3,419.4 816.1,420.7 842.1,433.8"/>
<polyline points="821.3,479.3 831.7,481.9 842.1,466.3 860.4,466.3 863.0,479.3"/>
<polyline points="842.1,433.8 863.0,437.7 868.2,453.3 883.8,455.9"/>
<polyline points="831.7,481.9 842.1,466.3"/>
<polyline points="842.1,445.5 852.6,442.9 857.8,453.3 842.1,468.9"/>
<polyline points="863.0,437.7 865.6,403.8"/>
<polyline points="881.2,403.8 883.8,455.9"/>
<polyline points="868.2,453.3 857.8,492.3"/>
<polyline points="873.4,455.9 894.2,463.7 909.8,479.3"/>
<polyline points="876.0,474.1 907.2,484.5"/>
<polyline points="883.8,463.7 868.2,497.5"/>
<polyline points="894.2,468.9 881.2,510.5"/>
<polyline points="907.2,479.3 894.2,507.9"/>
<polyline points="915.0,458.5 925.4,409.0"/>
<polyline points="889.0,403.8 886.4,458.5"/>
<polyline points="868.2,484.5 889.0,492.3"/>
<polyline points="870.8,494.9 886.4,500.1"/>
<polyline points="865.6,422.0 928.0,432.5"/>
<polyline points="907.2,435.1 940.0,440.3"/>
<polyline points="909.8,448.1 940.0,453.3"/>
<polyline points="691.2,375.2 704.2,377.8 696.4,396.0"/>
<polyline points="675.6,396.0 691.2,375.2"/>
<polyline points="704.2,377.8 717.2,375.2 727.7,401.2"/>
<polyline points="722.5,390.8 751.1,385.6"/>
<polyline points="725.1,406.4 745.9,396.0"/>
<polyline points="758.9,375.2 782.3,403.8"/>
<polyline points="805.7,370.0 816.1,385.6"/>
<polyline points="752.0,346.6 760.3,373.0"/>
<polyline points="775.0,352.3 768.5,363.0 791.5,392.6"/>
<polyline points="794.8,349.0 813.0,374.5"/>
<polyline points="824.4,368.0 893.4,368.0"/>
<polyline points="824.4,386.0 890.0,386.0"/>
<polyline points="850.7,340.0 847.4,366.3"/>
<polyline points="873.7,340.0 868.8,366.3"/>
<polyline points="863.8,404.0 900.0,405.8"/>
<polyline points="661.6,364.0 683.0,350.0"/>
<polyline points="696.0,374.0 707.0,358.0 718.0,365.0 705.0,395.0"/>
<polyline points="700.0,405.0 715.0,373.0 722.0,376.0 700.0,406.0"/>
<polyline points="931.8,360.0 1000.0,372.3"/>
<polyline points="894.8,360.0 883.7,405.0"/>
<polyline points="904.1,360.0 893.0,405.0"/>
<polyline points="920.7,360.0 909.6,405.0"/>
<polyline points="954.0,364.3 943.5,413.0"/>
<polyline points="978.7,360.0 966.3,417.4"/>
<polyline points="998.4,360.0 993.5,416.7"/>
<polyline points="915.2,383.4 927.5,385.9 922.6,405.6"/>
<polyline points="880.0,367.4 893.0,367.4"/>
<polyline points="880.0,386.5 888.0,386.5"/>
<polyline points="891.1,408.1 888.6,434.0"/>
<polyline points="911.5,408.7 907.8,450.0"/>
<polyline points="930.6,411.8 926.9,450.0"/>
<polyline points="950.9,418.0 949.7,450.0"/>
<polyline points="975.0,420.4 976.2,450.0"/>
<polyline points="888.6,434.0 949.1,442.6"/>
<polyline points="928.1,426.6 950.3,431.5"/>
<polyline points="976.2,427.2 1000.0,426.0"/>
<polyline points="976.2,434.6 1000.0,432.8"/>
<polyline points="976.2,442.0 1000.0,440.8"/>
<polyline points="993.7,374.8 1097.3,390.8"/>
<polyline points="1023.3,379.7 1015.9,416.7"/>
<polyline points="1050.5,385.9 1045.5,415.5"/>
<polyline points="1070.2,360.0 1065.3,387.1"/>
<polyline points="1092.4,360.0 1087.5,390.8"/>
<polyline points="1034.4,360.0 1033.2,379.7"/>
<polyline points="1050.5,360.0 1048.0,383.4"/>
<polyline points="964.1,360.0 962.9,364.9"/>
<polyline points="975.2,425.4 1015.9,425.4"/>
<polyline points="975.2,434.0 1015.9,433.5"/>
<polyline points="976.5,441.4 1015.9,440.2"/>
<polyline points="978.9,459.9 1035.7,464.8"/>
<polyline points="978.9,475.9 1018.4,474.7"/>
<polyline points="983.9,488.3 1018.4,489.5"/>
<polyline points="983.9,488.3 985.1,500.6"/>
<polyline points="950.6,419.2 949.3,478.4"/>
<polyline points="975.2,419.2 978.9,503.1"/>
<polyline points="998.7,441.4 998.7,458.7"/>
<polyline points="1018.4,418.0 1020.9,463.6"/>
<polyline points="1023.3,418.0 1025.8,463.6"/>
<polyline points="1035.7,418.0 1035.7,463.6"/>
<polyline points="1052.9,419.2 1055.4,463.6"/>
<polyline points="1070.2,419.2 1070.2,438.9"/>
<polyline points="1035.7,436.5 1072.7,438.9"/>
<polyline points="1104.7,392.1 1117.1,413.0"/>
<polyline points="1055.4,478.4 1048.0,508.0"/>
<polyline points="1055.4,478.4 1082.5,471.0"/>
<polyline points="1048.0,508.0 1062.8,532.7"/>
<polyline points="1048.0,508.0 1072.7,498.1"/>
<polyline points="1072.7,520.3 1092.4,530.2"/>
<polyline points="1023.3,495.7 1052.9,494.4"/>
<polyline points="1013.5,505.5 1028.3,520.3 1035.7,540.1"/>
<polyline points="978.9,517.9 1011.0,520.3"/>
<polyline points="981.4,530.2 1033.2,530.2"/>
<polyline points="1097.3,520.3 1089.9,540.1"/>
<polyline points="924.7,458.7 937.0,483.3"/>
<polyline points="900.0,475.9 922.2,463.6"/>
<polyline points="907.4,488.3 900.0,517.9"/>
<polyline points="929.6,480.9 907.4,540.1"/>
<polyline points="937.0,493.2 914.8,532.7"/>
<polyline points="951.8,520.3 944.4,540.1"/>
<polyline points="961.7,508.0 956.7,540.1"/>
<polyline points="978.1,462.4 980.5,498.6"/>
<polyline points="960.0,456.7 976.4,456.7"/>
<polyline points="1023.3,418.1 1025.7,432.9 1029.0,464.1"/>
<polyline points="1025.7,432.9 1055.3,438.6 1089.8,435.3"/>
<polyline points="1032.3,434.5 1033.1,464.1"/>
<polyline points="1066.8,418.9 1071.7,438.6"/>
<polyline points="1056.9,439.4 1056.1,464.1 1038.9,464.1"/>
<polyline points="1056.1,465.7 1068.4,480.5"/>
<polyline points="1083.2,439.4 1081.6,465.7 1068.4,480.5 1052.0,505.2"/>
<polyline points="978.9,477.2 1019.2,475.6"/>
<polyline points="1020.8,464.1 1021.6,475.6 1024.1,475.6"/>
<polyline points="1025.7,477.2 1055.3,478.0"/>
<polyline points="1024.1,494.5 1051.2,492.8"/>
<polyline points="1025.7,515.0 1051.2,513.4"/>
<polyline points="1086.5,441.1 1100.0,454.2"/>
<polyline points="1084.9,450.9 1100.0,469.0"/>
<polyline points="1081.6,465.7 1100.0,482.2"/>
<polyline points="1076.7,475.6 1100.0,492.0"/>
<polyline points="1066.8,482.2 1100.0,505.2"/>
<polyline points="1058.6,500.2 1075.0,515.0"/>
<polyline points="1053.7,506.8 1066.8,519.9"/>
<polyline points="979.6,520.1 1035.1,520.1"/>
<polyline points="980.7,538.5 1036.1,539.6"/>
<polyline points="980.7,552.9 1036.1,554.0"/>
<polyline points="1006.3,539.6 1007.4,552.9"/>
<polyline points="982.7,564.2 999.1,564.2 1000.2,571.4 1036.1,570.4"/>
<polyline points="951.9,568.3 980.7,568.3"/>
<polyline points="954.0,576.5 972.4,576.5"/>
<polyline points="1001.2,575.5 1013.5,575.5 1013.5,581.7 1001.2,581.7"/>
<polyline points="1011.5,577.6 1011.5,595.0"/>
<polyline points="1019.7,577.6 1021.7,595.0"/>
<polyline points="1030.0,578.6 1031.0,595.0"/>
<polyline points="933.4,549.8 970.4,545.7"/>
<polyline points="934.4,562.2 970.4,558.1"/>
<polyline points="952.9,562.2 954.0,588.9"/>
<polyline points="970.4,575.5 971.4,590.9"/>
<polyline points="978.6,521.1 978.6,564.2"/>
<polyline points="1013.5,496.4 980.7,502.6 979.6,520.1"/>
<polyline points="1036.1,521.1 1046.4,539.6 1044.3,588.9"/>
<polyline points="880.0,513.9 894.4,508.8 904.7,521.1 923.1,531.4 927.2,547.8 933.4,549.8 935.5,586.8 951.9,590.9 1011.5,592.0 1038.2,595.0 1044.3,601.2 1077.2,597.1 1077.2,588.9 1044.3,588.9"/>
<polyline points="904.7,521.1 921.1,514.9 927.2,547.8"/>
<polyline points="910.8,525.2 923.1,541.6"/>
<polyline points="929.3,523.1 937.5,545.7"/>
<polyline points="939.6,521.1 947.8,541.6"/>
<polyline points="1050.5,527.2 1085.4,531.4 1100.0,539.6"/>
<polyline points="1040.2,517.0 1050.5,527.2"/>
<polyline points="880.0,570.4 892.3,558.1 904.7,547.8"/>
<polyline points="886.2,551.9 900.5,547.8 908.8,554.0"/>
<polyline points="894.4,527.2 906.7,521.1"/>
<polyline points="900.5,541.6 880.0,545.7"/>
<polyline points="914.9,562.2 927.2,576.5"/>
<polyline points="904.7,576.5 914.9,566.3"/>
<polyline points="921.1,582.7 933.4,570.4"/>
<polyline points="1095.6,425.8 1175.0,382.0"/>
<polyline points="1103.8,390.0 1117.5,413.4"/>
<polyline points="1106.6,450.4 1186.0,405.0"/>
<polyline points="1117.5,464.0 1197.0,419.0"/>
<polyline points="1142.2,488.8 1216.0,449.0"/>
<polyline points="1169.6,505.2 1229.9,472.3"/>
<polyline points="1188.8,524.4 1240.8,494.2"/>
<polyline points="1194.2,538.0 1251.8,506.6"/>
<polyline points="1197.0,551.8 1260.0,521.6"/>
<polyline points="1191.5,403.8 1262.0,365.5"/>
<polyline points="1199.7,417.5 1270.5,379.5"/>
<polyline points="1205.2,431.2 1279.0,392.0"/>
<polyline points="1175.0,376.4 1279.2,560.0"/>
<polyline points="1240.0,434.0 1279.5,413.0"/>
<polyline points="1240.0,463.5 1291.8,436.4"/>
<polyline points="1240.0,488.2 1301.6,458.6"/>
<polyline points="1245.0,494.4 1306.6,463.5"/>
<polyline points="1254.8,508.0 1314.0,479.6"/>
<polyline points="1259.7,522.7 1321.4,488.2"/>
<polyline points="1261.0,376.0 1286.8,362.5"/>
<polyline points="1272.0,398.2 1306.6,381.0"/>
<polyline points="1293.0,434.0 1321.4,419.2"/>
<polyline points="1311.5,463.5 1336.2,450.0"/>
<polyline points="1331.2,500.5 1358.3,485.7"/>
<polyline points="1346.0,525.2 1373.2,510.4"/>
<polyline points="1353.4,385.9 1400.0,360.0"/>
<polyline points="1358.3,397.0 1400.0,374.8"/>
<polyline points="1364.5,408.0 1400.0,387.0"/>
<polyline points="1374.4,426.6 1400.0,410.5"/>
<polyline points="1380.5,436.4 1400.0,425.3"/>
<polyline points="1331.2,360.0 1333.7,371.0"/>
<polyline points="1333.7,365.0 1348.5,360.0"/>
<polyline points="1240.0,490.7 1269.6,540.0"/>
<polyline points="1090.0,385.0 1112.0,387.0"/>
<polyline points="1065.0,360.0 1064.0,386.0"/>
<polyline points="1086.0,360.0 1083.0,391.0"/>
<polyline points="1060.0,439.0 1076.0,439.0"/>
<polyline points="1085.0,442.0 1126.0,483.0"/>
<polyline points="1076.0,475.0 1114.0,491.0"/>
<polyline points="1060.0,472.0 1107.0,508.0"/>
<polyline points="1074.0,478.0 1087.0,497.0"/>
<polyline points="1120.0,484.0 1109.0,513.0"/>
<polyline points="1128.0,490.0 1117.0,516.0"/>
<polyline points="1136.0,496.0 1126.0,521.0"/>
<polyline points="1145.0,500.0 1134.0,524.0"/>
<polyline points="1153.0,505.0 1142.0,530.0"/>
<polyline points="1148.0,516.0 1175.0,502.0"/>
<polyline points="1128.0,524.0 1164.0,549.0"/>
<polyline points="1098.0,513.0 1096.0,535.0"/>
<polyline points="1156.0,524.0 1167.0,549.0"/>
<polyline points="1486.1,360.0 1518.1,414.3 1557.6,478.4 1592.1,532.7 1597.1,540.1"/>
<polyline points="1380.0,371.1 1399.7,360.0"/>
<polyline points="1380.0,384.7 1424.4,360.0"/>
<polyline points="1380.0,399.5 1435.5,368.6"/>
<polyline points="1380.0,422.9 1444.1,387.1"/>
<polyline points="1380.0,434.0 1450.3,399.5"/>
<polyline points="1387.4,450.0 1456.5,411.8"/>
<polyline points="1394.8,458.7 1463.9,420.4"/>
<polyline points="1425.6,487.0 1486.1,452.5"/>
<polyline points="1439.2,508.0 1497.2,475.9"/>
<polyline points="1447.8,524.0 1508.3,490.7"/>
<polyline points="1473.7,540.1 1520.6,512.9"/>
<polyline points="1456.5,393.3 1493.5,373.6"/>
<polyline points="1476.2,424.1 1513.2,404.4"/>
<polyline points="1502.1,382.2 1537.9,362.5"/>
<polyline points="1508.3,397.0 1547.7,376.0"/>
<polyline points="1518.1,411.8 1555.1,390.8"/>
<polyline points="1503.3,471.0 1572.4,420.4"/>
<polyline points="1550.2,368.6 1565.0,360.0"/>
<polyline points="1569.9,403.2 1600.0,385.9"/>
<polyline points="1574.9,500.6 1600.0,485.8"/>
<polyline points="1535.4,530.2 1577.3,508.0"/>
<polyline points="1589.7,530.2 1600.0,524.0"/>
<polyline points="1380.0,512.9 1392.3,540.1"/>
<polyline points="795.3,649.3 816.2,625.9"/>
<polyline points="745.9,654.5 795.3,680.6"/>
<polyline points="857.8,649.3 900.0,654.5"/>
<polyline points="693.8,625.9 696.4,649.3"/>
<polyline points="667.8,670.1 709.5,664.9"/>
<polyline points="670.4,691.0 722.5,685.8"/>
<polyline points="675.6,711.8 730.3,706.6"/>
<polyline points="1045.8,560.8 1140.0,573.8"/>
<polyline points="1079.6,579.0 1140.0,586.9"/>
<polyline points="1045.8,610.3 1140.0,618.1"/>
<polyline points="1040.6,654.5 1140.0,662.3"/>
<polyline points="933.8,550.4 972.9,547.8"/>
<polyline points="933.8,563.4 972.9,560.8"/>
<polyline points="952.1,573.8 978.1,571.2"/>
<polyline points="978.1,566.0 1045.8,566.0"/>
<polyline points="983.3,589.5 1011.9,594.7"/>
<polyline points="1006.7,540.0 1006.7,573.8"/>
<polyline points="1037.9,540.0 1037.9,579.0"/>
<polyline points="1009.3,576.4 1037.9,579.0"/>
<polyline points="1011.9,579.0 1011.9,594.7"/>
<polyline points="1022.3,579.0 1022.3,594.7"/>
<polyline points="1030.1,579.0 1030.1,594.7"/>
<polyline points="1045.8,589.5 1079.6,589.5 1079.6,599.9 1045.8,601.2"/>
<polyline points="1092.6,540.0 1140.0,545.2"/>
<polyline points="944.2,649.3 985.9,654.5"/>
<polyline points="931.2,670.1 983.3,675.3"/>
<polyline points="926.0,688.4 972.9,693.6"/>
<polyline points="905.2,662.3 915.6,644.1"/>
<polyline points="1056.2,654.5 1056.2,681.9"/>
<polyline points="1071.8,633.7 1082.2,633.7 1082.2,638.9 1071.8,638.9"/>
<polyline points="1071.8,649.3 1082.2,649.3 1082.2,657.1 1071.8,657.1"/>
<polyline points="1103.0,696.2 1108.2,730.0"/>
<polyline points="1113.4,706.6 1116.0,730.0"/>
<polyline points="1118.6,706.6 1121.2,730.0"/>
<polyline points="1123.8,706.6 1126.4,730.0"/>
<polyline points="1097.3,532.9 1160.5,547.3 1160.5,586.1 1149.0,606.3 1179.2,619.2 1172.0,649.4"/>
<polyline points="1080.0,547.3 1149.0,563.1"/>
<polyline points="1080.0,560.3 1149.0,570.3"/>
<polyline points="1080.0,577.5 1141.8,589.0"/>
<polyline points="1080.0,590.5 1114.5,597.7"/>
<polyline points="1080.0,603.4 1137.5,607.7"/>
<polyline points="1088.6,537.3 1085.8,560.3"/>
<polyline points="1100.1,560.3 1097.3,603.4"/>
<polyline points="1117.4,563.1 1114.5,603.4"/>
<polyline points="1134.6,566.0 1131.8,606.3"/>
<polyline points="1091.5,603.4 1090.1,619.2"/>
<polyline points="1104.4,604.8 1103.0,620.7"/>
<polyline points="1133.2,606.3 1131.8,623.5 1149.0,606.3"/>
<polyline points="1080.0,620.7 1151.9,635.0"/>
<polyline points="1088.6,629.3 1087.2,675.3"/>
<polyline points="1101.6,630.7 1100.1,675.3"/>
<polyline points="1113.1,632.2 1111.6,681.1"/>
<polyline points="1123.1,633.6 1121.7,681.1"/>
<polyline points="1134.6,635.0 1133.2,681.1"/>
<polyline points="1144.7,637.9 1141.8,681.1"/>
<polyline points="1156.2,642.2 1153.3,681.1"/>
<polyline points="1080.0,675.3 1166.3,678.2"/>
<polyline points="1080.0,652.3 1108.8,655.2"/>
<polyline points="1166.3,678.2 1163.4,695.4 1174.9,698.3"/>
<polyline points="1163.4,692.6 1166.3,681.1"/>
<polyline points="1177.8,683.9 1174.9,704.1 1212.3,704.1 1215.2,692.6"/>
<polyline points="1220.9,689.7 1215.2,709.8 1235.3,715.6"/>
<polyline points="1252.6,689.7 1241.1,709.8"/>
<polyline points="1264.1,709.8 1298.6,675.3"/>
<polyline points="1281.3,692.6 1281.3,730.0"/>
<polyline points="1298.6,681.1 1298.6,730.0"/>
<polyline points="1315.8,681.1 1310.1,730.0"/>
<polyline points="1298.6,698.3 1327.3,704.1"/>
<polyline points="1080.0,704.1 1091.5,730.0"/>
<polyline points="1108.8,704.1 1111.6,730.0"/>
<polyline points="1108.8,706.9 1137.5,706.9"/>
<polyline points="1117.4,706.9 1114.5,730.0"/>
<polyline points="1123.1,706.9 1120.3,730.0"/>
<polyline points="1128.9,706.9 1126.0,730.0"/>
<polyline points="1134.6,706.9 1131.8,730.0"/>
<polyline points="1143.3,706.9 1146.1,730.0"/>
<polyline points="1160.5,709.8 1166.3,730.0"/>
<polyline points="1192.2,623.5 1215.2,597.7 1241.1,620.7 1236.7,643.7 1192.2,635.0 1192.2,623.5"/>
<polyline points="1195.0,612.0 1241.1,640.8"/>
<polyline points="1160.5,547.3 1174.9,577.5 1206.5,591.9"/>
<polyline points="1166.3,591.9 1206.5,597.7"/>
<polyline points="1174.9,577.5 1160.5,586.1"/>
<polyline points="1151.9,543.0 1149.0,520.0"/>
<polyline points="1126.0,525.8 1154.8,543.0"/>
<polyline points="1137.5,520.0 1174.9,545.9"/>
<polyline points="1163.4,520.0 1180.7,537.3"/>
<polyline points="1189.3,537.3 1203.7,520.0"/>
<polyline points="1195.0,551.6 1241.1,520.0"/>
<polyline points="1200.8,563.1 1266.9,520.0"/>
<polyline points="1229.6,591.9 1310.1,537.3 1340.0,520.0"/>
<polyline points="1241.1,606.3 1327.3,551.6"/>
<polyline points="1252.6,617.8 1340.0,566.0"/>
<polyline points="1269.8,629.3 1340.0,586.1"/>
<polyline points="1292.8,640.8 1340.0,612.0"/>
<polyline points="1264.1,520.0 1324.5,640.8"/>
<polyline points="1183.5,646.5 1229.6,620.7"/>
<polyline points="1180.7,663.8 1241.1,646.5"/>
<polyline points="1189.3,669.6 1241.1,655.2"/>
<polyline points="1241.1,655.2 1295.7,675.3"/>
<polyline points="1243.9,643.7 1310.1,658.1"/>
<polyline points="1258.3,632.2 1324.5,649.4"/>
<polyline points="1266.9,663.8 1281.3,683.9"/>
<polyline points="1235.3,637.9 1223.8,675.3"/>
<polyline points="1249.7,640.8 1238.2,681.1"/>
<polyline points="1264.1,643.7 1249.7,686.8"/>
<polyline points="1275.6,646.5 1264.1,689.7"/>
<polyline points="1287.1,649.4 1278.4,692.6"/>
<polyline points="1310.1,649.4 1298.6,681.1 1281.3,704.1"/>
<polyline points="1318.7,655.2 1340.0,675.3"/>
<polyline points="1318.7,669.6 1340.0,692.6"/>
<polyline points="1327.3,681.1 1340.0,704.1"/>
<polyline points="1266.9,692.6 1281.3,709.8 1298.6,721.3"/>
<polyline points="1458.1,545.2 1471.1,540.0"/>
<polyline points="1469.8,572.5 1525.8,540.0"/>
<polyline points="1476.3,586.9 1541.4,550.4"/>
<polyline points="1484.1,601.2 1549.2,563.4"/>
<polyline points="1507.5,629.8 1567.4,596.0"/>
<polyline points="1566.1,579.0 1599.9,560.8"/>
<polyline points="1576.5,597.3 1599.9,584.2"/>
<polyline points="1585.6,615.5 1599.9,607.7"/>
<polyline points="1529.7,620.7 1553.1,659.7"/>
<polyline points="1546.6,609.0 1575.2,659.7"/>
<polyline points="1489.3,664.9 1515.3,691.0 1525.8,711.8 1531.0,730.0"/>
<polyline points="1497.1,667.5 1520.6,688.4 1531.0,706.6"/>
<polyline points="1504.9,668.8 1528.4,685.8 1536.2,696.2"/>
<polyline points="1531.0,730.0 1525.8,711.8"/>
<polyline points="1525.8,670.1 1562.2,675.3 1599.9,677.9"/>
<polyline points="1531.0,680.6 1562.2,688.4 1599.9,691.0"/>
<polyline points="1533.6,693.6 1562.2,698.8 1599.9,704.0"/>
<polyline points="1536.2,706.6 1562.2,711.8 1599.9,717.0"/>
<polyline points="1536.2,719.6 1599.9,727.4"/>
<polyline points="1599.9,662.3 1580.4,730.0"/>
<polyline points="1484.1,722.2 1504.9,730.0"/>
<polyline points="1340.0,545.9 1348.6,541.6"/>
<polyline points="1340.0,563.1 1371.6,547.3"/>
<polyline points="1340.0,590.5 1380.3,571.8"/>
<polyline points="1340.0,616.3 1391.8,593.3"/>
<polyline points="1340.0,642.2 1407.6,614.9"/>
<polyline points="1361.6,548.8 1386.0,537.3"/>
<polyline points="1377.4,579.0 1401.8,567.5"/>
<polyline points="1393.2,606.3 1417.7,596.2"/>
<polyline points="1406.1,626.4 1422.0,619.2"/>
<polyline points="1414.8,640.8 1424.8,636.5"/>
<polyline points="1368.8,630.7 1386.0,658.1"/>
<polyline points="1340.0,666.7 1377.4,672.4 1426.3,683.9 1449.3,658.1"/>
<polyline points="1340.0,681.1 1371.6,689.7 1426.3,695.4 1475.2,689.7"/>
<polyline points="1368.8,704.1 1426.3,709.8 1480.9,698.3"/>
<polyline points="1368.8,721.3 1440.7,718.4 1495.3,704.1"/>
<polyline points="1377.4,672.4 1368.8,704.1 1371.6,730.0"/>
<polyline points="1426.3,683.9 1429.2,709.8 1440.7,730.0"/>
<polyline points="1475.2,663.8 1472.3,689.7 1495.3,706.9 1486.7,730.0"/>
<polyline points="1345.8,704.1 1368.8,721.3"/>
<polyline points="1345.8,704.1 1342.9,730.0"/>
</g>
<g fill="none" stroke="#333" stroke-width="7" stroke-linejoin="round" stroke-linecap="butt">
<polyline points="678.2,540.0 693.8,571.2 705.5,599.9 738.1,623.3 777.1,649.3 805.8,672.7 842.2,696.2 881.2,722.2 894.3,730.0"/>
<polyline points="662.6,610.3 686.0,602.5 705.5,599.9"/>
<polyline points="705.5,599.9 719.9,618.1 706.9,641.5 712.1,662.3 740.7,722.2 743.3,730.0"/>
<polyline points="662.6,649.3 706.9,641.5"/>
<polyline points="738.1,545.2 758.9,592.1 774.5,605.1 816.2,625.9 847.4,636.3"/>
<polyline points="826.6,680.6 900.0,672.7"/>
<polyline points="790.1,672.7 769.3,717.0"/>
<polyline points="660.0,727.4 712.1,719.6 764.1,719.6 842.2,727.4 900.0,730.0"/>
<polyline points="738.1,545.2 758.9,592.1 774.5,605.1 816.2,625.9 847.4,636.3"/>
<polyline points="1037.9,618.1 1040.6,691.0"/>
<polyline points="900.0,685.8 952.1,698.8 991.1,722.2 1004.1,730.0"/>
<polyline points="1024.9,706.6 1011.9,730.0"/>
<polyline points="662.3,412.1 690.3,399.3"/>
<polyline points="776.4,412.1 757.8,429.6 729.8,450.5 708.9,464.5 701.9,476.1 699.6,485.5"/>
<polyline points="662.3,490.1 683.3,487.8 722.9,487.8 736.8,497.1 757.8,515.7 774.1,529.7 785.7,541.3 799.7,553.0 829.0,566.0 855.0,567.0 878.4,568.1 892.0,574.2 905.8,585.2 925.0,598.9 944.1,611.2 963.3,614.7 1040.0,620.8 1082.2,623.3 1140.0,629.8"/>
<polyline points="757.8,429.6 776.4,448.2 799.7,466.8 823.0,483.1 843.9,497.1 848.6,506.4 849.8,545.0"/>
<polyline points="799.7,543.7 852.6,536.5 868.2,528.7 881.2,513.1"/>
</g><g fill="none" stroke="#fff" stroke-width="5" stroke-linejoin="round" stroke-linecap="butt">
<polyline points="678.2,540.0 693.8,571.2 705.5,599.9 738.1,623.3 777.1,649.3 805.8,672.7 842.2,696.2 881.2,722.2 894.3,730.0"/>
<polyline points="662.6,610.3 686.0,602.5 705.5,599.9"/>
<polyline points="705.5,599.9 719.9,618.1 706.9,641.5 712.1,662.3 740.7,722.2 743.3,730.0"/>
<polyline points="662.6,649.3 706.9,641.5"/>
<polyline points="738.1,545.2 758.9,592.1 774.5,605.1 816.2,625.9 847.4,636.3"/>
<polyline points="826.6,680.6 900.0,672.7"/>
<polyline points="790.1,672.7 769.3,717.0"/>
<polyline points="660.0,727.4 712.1,719.6 764.1,719.6 842.2,727.4 900.0,730.0"/>
<polyline points="738.1,545.2 758.9,592.1 774.5,605.1 816.2,625.9 847.4,636.3"/>
<polyline points="1037.9,618.1 1040.6,691.0"/>
<polyline points="900.0,685.8 952.1,698.8 991.1,722.2 1004.1,730.0"/>
<polyline points="1024.9,706.6 1011.9,730.0"/>
<polyline points="662.3,412.1 690.3,399.3"/>
<polyline points="776.4,412.1 757.8,429.6 729.8,450.5 708.9,464.5 701.9,476.1 699.6,485.5"/>
<polyline points="662.3,490.1 683.3,487.8 722.9,487.8 736.8,497.1 757.8,515.7 774.1,529.7 785.7,541.3 799.7,553.0 829.0,566.0 855.0,567.0 878.4,568.1 892.0,574.2 905.8,585.2 925.0,598.9 944.1,611.2 963.3,614.7 1040.0,620.8 1082.2,623.3 1140.0,629.8"/>
<polyline points="757.8,429.6 776.4,448.2 799.7,466.8 823.0,483.1 843.9,497.1 848.6,506.4 849.8,545.0"/>
<polyline points="799.7,543.7 852.6,536.5 868.2,528.7 881.2,513.1"/>
</g>
<circle cx="1349" cy="-11.6" r="30" fill="none" stroke="#111" stroke-width="1.3"/>
<polygon points="1302.5,81 1308,80.5 1312,93 1310,94 1329,130.5 1325,130 1309,101 1303,85" fill="#fff" stroke="#333" stroke-width="1"/>
<circle cx="1290.5" cy="48.1" r="35.3" fill="#fff" stroke="#333" stroke-width="1.2"/>
<polygon points="817,383.5 810,395.5 824,395.5" fill="none" stroke="#111" stroke-width="1"/><circle cx="817" cy="391.5" r="1.2" fill="#111"/>
<polyline points="1080,621 1151.9,635.5 1175,646.5" fill="none" stroke="#333" stroke-width="2"/>
<polygon points="1385.7,657.5 1378.8,669.5 1392.6,669.5" fill="none" stroke="#111" stroke-width="1"/>
<circle cx="1385.7" cy="665.5" r="1.2" fill="#111"/>
<polygon points="662.6,529.9 676.8,526.5 703.4,533.4 738.0,543.2 746.4,549.5 759.3,569.7 775.1,606.7 805.0,620.4 862.6,636.2 900.1,636.2 940.0,632.9 957.8,636.1 969.5,647.8 977.8,664.1 982.2,681.4 993.6,693.3 1013.6,701.6 1033.6,702.9 1051.4,701.0 1072.7,694.8 1093.4,690.7 1120.3,690.5 1140.7,694.0 1152.6,701.4 1163.6,714.1 1177.2,720.8 1194.9,724.8 1217.0,722.6 1230.1,711.9 1239.4,709.9 1246.6,713.7 1254.7,723.8 1259.9,735.9 1264.1,734.1 1258.5,721.4 1249.6,710.3 1239.8,705.5 1227.9,707.9 1215.4,718.4 1195.1,720.4 1178.8,716.0 1167.0,709.9 1156.6,697.0 1143.1,687.4 1120.9,682.5 1092.6,682.3 1070.7,686.6 1049.6,693.2 1033.4,695.5 1015.2,694.8 996.8,688.1 987.0,678.8 983.0,662.1 974.3,644.4 960.4,630.7 940.0,627.5 899.9,631.2 863.4,631.2 806.6,615.6 778.9,603.3 763.7,567.5 750.6,546.1 740.0,538.0 704.6,528.6 677.2,521.5 661.4,525.1" fill="#bfe4ef" stroke="#333" stroke-width="1"/>
<polygon points="1168.5,364.5 1229.5,330.5 1236,340.5 1175,375.5" fill="#c6c6c6" stroke="#0a1ee8" stroke-width="3"/>
<polygon points="1245,336 1350,260.5 1355.5,285 1485,246 1495,287 1367.5,321.5 1373,344.5" fill="none" stroke="#e31e24" stroke-width="8.6" stroke-linejoin="miter" stroke-miterlimit="10"/>
<circle cx="684.2" cy="98.7" r="30.8" fill="none" stroke="#111" stroke-width="1.3"/>
<text x="684.2" y="106.9" font-family="Liberation Serif" font-size="24" text-anchor="middle" fill="#1a1a1a">2223</text>
<circle cx="710.6" cy="335.4" r="30.1" fill="none" stroke="#111" stroke-width="1.3"/>
<text x="710.6" y="343.6" font-family="Liberation Serif" font-size="24" text-anchor="middle" fill="#1a1a1a">2232</text>
<circle cx="990.8" cy="240.9" r="30.8" fill="none" stroke="#111" stroke-width="1.3"/>
<text x="990.8" y="249.1" font-family="Liberation Serif" font-size="24" text-anchor="middle" fill="#1a1a1a">2224</text>
<circle cx="948.6" cy="506.8" r="30.1" fill="none" stroke="#111" stroke-width="1.3"/>
<text x="948.6" y="515.0" font-family="Liberation Serif" font-size="24" text-anchor="middle" fill="#1a1a1a">2234</text>
<circle cx="1535.4" cy="449.5" r="30.8" fill="none" stroke="#111" stroke-width="1.3"/>
<text x="1535.4" y="457.7" font-family="Liberation Serif" font-size="24" text-anchor="middle" fill="#1a1a1a">2222</text>
<circle cx="957.8" cy="660.5" r="30.7" fill="none" stroke="#111" stroke-width="1.3"/>
<text x="957.8" y="668.7" font-family="Liberation Serif" font-size="24" text-anchor="middle" fill="#1a1a1a">2196</text>
<circle cx="1272.7" cy="621.2" r="30.5" fill="none" stroke="#111" stroke-width="1.3"/>
<text x="1272.7" y="629.4" font-family="Liberation Serif" font-size="24" text-anchor="middle" fill="#1a1a1a">2236</text>
</svg></div></div>
<div class="abs" style="left:0;top:728.5px;width:1600px;height:1.5px;background:#333"></div>
</body></html>
